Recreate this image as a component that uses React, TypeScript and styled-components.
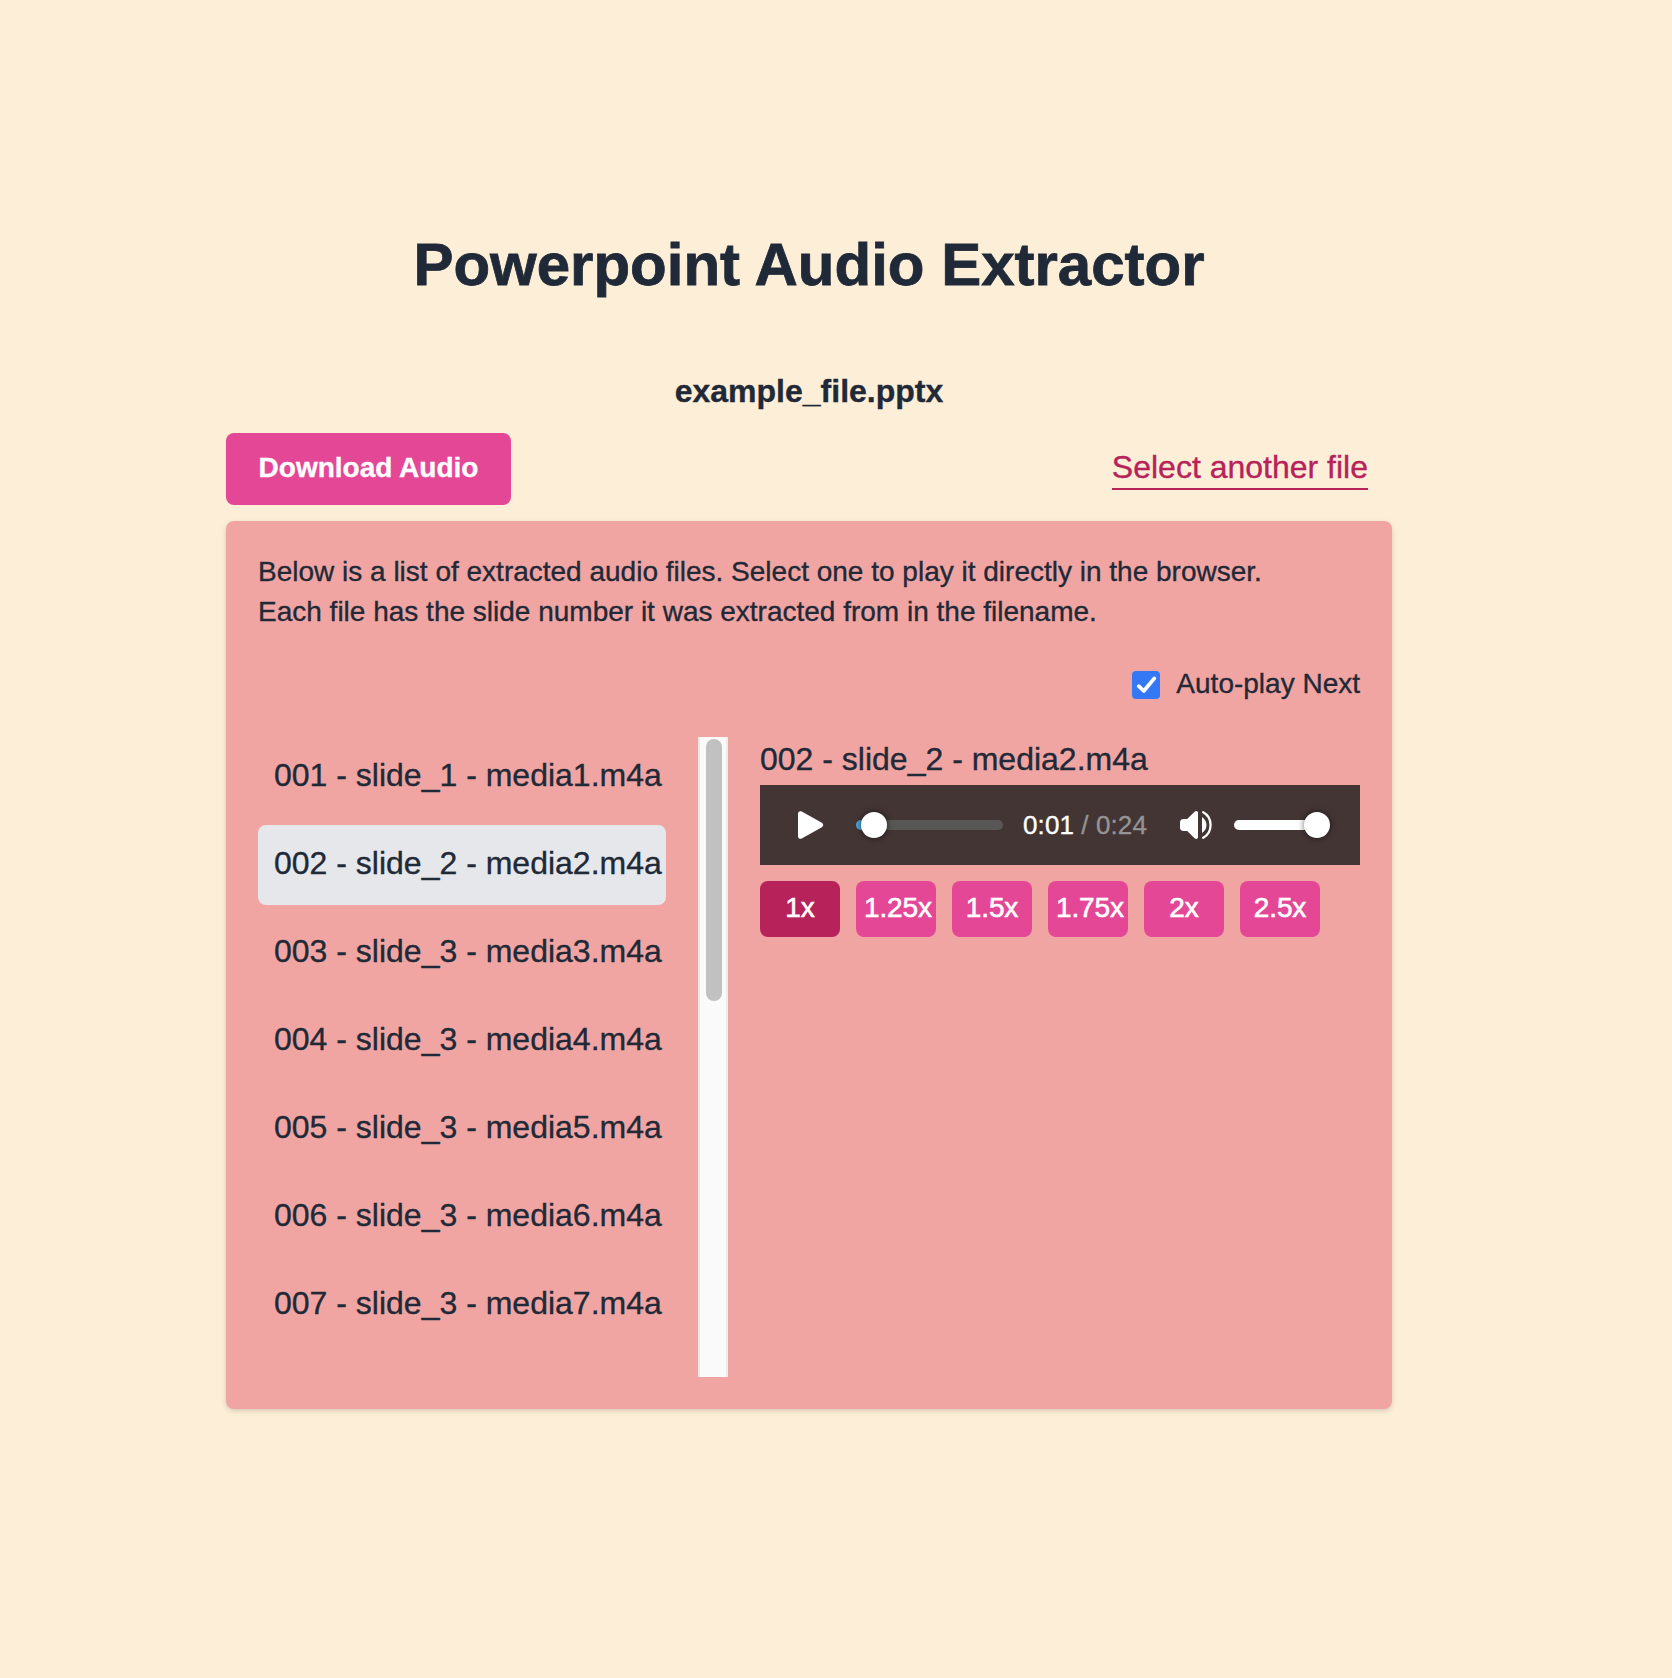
import React, { useState } from "react";
import styled, { createGlobalStyle } from "styled-components";

const Global = createGlobalStyle`
  *, *::before, *::after { box-sizing: border-box; }
  body {
    margin: 0;
    background: #fdeed8;
    color: #1f2937;
    font-family: "Liberation Sans", Arial, sans-serif;
    -webkit-text-stroke: 0.35px currentColor;
  }
  h1, h2, p, ul { margin: 0; padding: 0; }
  button { font-family: inherit; border: 0; cursor: pointer; }
`;

const Page = styled.main`
  width: 1166px;
  min-height: 1678px;
  margin-left: 226px;
  padding-top: 229px;
`;

const Title = styled.h1`
  font-size: 60px;
  line-height: 72px;
  font-weight: 700;
  text-align: center;
  white-space: nowrap;
  -webkit-text-stroke-width: 0.8px;
`;

const FileName = styled.h2`
  margin-top: 66px;
  font-size: 32px;
  line-height: 48px;
  font-weight: 700;
  text-align: center;
`;

const Actions = styled.div`
  display: flex;
  justify-content: space-between;
  align-items: flex-start;
  height: 72px;
  margin-top: 18px;
  padding-right: 24px;
`;

const DownloadButton = styled.button`
  width: 285px;
  height: 72px;
  padding: 0 0 2px;
  border-radius: 8px;
  background: #e54797;
  color: #fff;
  font-size: 28px;
  line-height: 40px;
  font-weight: 700;
  white-space: nowrap;
`;

const SelectLink = styled.a`
  height: 57px;
  padding-top: 10px;
  border-bottom: 2px solid #b62259;
  color: #b62259;
  font-size: 32px;
  line-height: 48px;
  white-space: nowrap;
`;

const Card = styled.section`
  height: 888px;
  margin-top: 16px;
  padding: 31px 32px 32px;
  border-radius: 8px;
  background: #f1a5a3;
  box-shadow: 0 2px 6px rgba(0, 0, 0, 0.1), 0 2px 4px rgba(0, 0, 0, 0.06);
`;

const Intro = styled.p`
  font-size: 28px;
  line-height: 40px;
  white-space: nowrap;
`;

const AutoPlay = styled.label`
  display: flex;
  justify-content: flex-end;
  align-items: center;
  gap: 16px;
  height: 40px;
  margin-top: 33px;
  font-size: 28px;
  line-height: 36px;
`;

const AutoPlayText = styled.span`
  padding-bottom: 2px;
`;

const Check = styled.span`
  display: flex;
  width: 28px;
  height: 28px;
  border-radius: 4px;
  background: #3478f6;
`;

const Columns = styled.div`
  display: flex;
  height: 640px;
  margin-top: 32px;
`;

const ListPane = styled.div`
  display: flex;
  justify-content: space-between;
  width: 470px;
  margin-right: 32px;
`;

const FileList = styled.ul`
  display: flex;
  flex-direction: column;
  gap: 8px;
  width: 408px;
  list-style: none;
`;

const FileRow = styled.li<{ $selected: boolean }>`
  height: 80px;
  padding: 14px 0 0 16px;
  border-radius: 8px;
  background: ${(p) => (p.$selected ? "#e5e7eb" : "transparent")};
  font-size: 32px;
  line-height: 48px;
  white-space: nowrap;
  cursor: pointer;
`;

const ScrollTrack = styled.div`
  width: 30px;
  height: 640px;
  padding: 2px 4px 0 6px;
  border-left: 2px solid #e8e8e8;
  border-right: 2px solid #ededed;
  background: #fafafa;
`;

const ScrollThumb = styled.div`
  width: 16px;
  height: 262px;
  border-radius: 8px;
  background: #c1c1c1;
`;

const PlayerPane = styled.div`
  width: 600px;
`;

const TrackName = styled.p`
  height: 48px;
  font-size: 32px;
  line-height: 44px;
  white-space: nowrap;
`;

const Player = styled.div`
  display: flex;
  align-items: center;
  height: 80px;
  padding-left: 36px;
  background: #433534;
`;

const Slider = styled.div<{ $width: number; $left: number; $rail: string }>`
  display: flex;
  align-items: center;
  width: ${(p) => p.$width}px;
  height: 10px;
  margin-left: ${(p) => p.$left}px;
  border-radius: 5px;
  background: ${(p) => p.$rail};
`;

const Played = styled.div<{ $width: number; $color: string }>`
  flex: none;
  width: ${(p) => p.$width}px;
  height: 10px;
  border-radius: 5px 0 0 5px;
  background: ${(p) => p.$color};
`;

const Knob = styled.div`
  flex: none;
  width: 26px;
  height: 26px;
  margin-left: -13px;
  border-radius: 50%;
  background: #fff;
  box-shadow: 0 0 6px rgba(0, 0, 0, 0.6);
`;

const Time = styled.div`
  width: 158px;
  padding-left: 20px;
  color: #949494;
  font-size: 26px;
  line-height: 32px;
  letter-spacing: 0.1px;
  white-space: nowrap;
`;

const Elapsed = styled.span`
  color: #fff;
`;

const VolumeIcon = styled.svg`
  flex: none;
  margin-left: 19px;
`;

const Speeds = styled.div`
  display: flex;
  gap: 16px;
  margin-top: 16px;
`;

const SpeedButton = styled.button<{ $active: boolean }>`
  display: flex;
  justify-content: safe center;
  width: 80px;
  height: 56px;
  padding: 7px 8px 0;
  border-radius: 8px;
  background: ${(p) => (p.$active ? "#b62259" : "#e54797")};
  color: #fff;
  font-size: 28px;
  line-height: 40px;
  letter-spacing: -0.15px;
  white-space: nowrap;
  -webkit-text-stroke-width: 0.6px;
`;

const files = [
  "001 - slide_1 - media1.m4a",
  "002 - slide_2 - media2.m4a",
  "003 - slide_3 - media3.m4a",
  "004 - slide_3 - media4.m4a",
  "005 - slide_3 - media5.m4a",
  "006 - slide_3 - media6.m4a",
  "007 - slide_3 - media7.m4a",
];

const speeds = ["1x", "1.25x", "1.5x", "1.75x", "2x", "2.5x"];

export default function App() {
  const [selected, setSelected] = useState(1);
  const [speed, setSpeed] = useState("1x");

  return (
    <>
      <Global />
      <Page>
        <Title>Powerpoint Audio Extractor</Title>
        <FileName>example_file.pptx</FileName>
        <Actions>
          <DownloadButton>Download Audio</DownloadButton>
          <SelectLink>Select another file</SelectLink>
        </Actions>
        <Card>
          <Intro>
            Below is a list of extracted audio files. Select one to play it directly in the browser.
            <br />
            Each file has the slide number it was extracted from in the filename.
          </Intro>
          <AutoPlay>
            <Check>
              <svg width="28" height="28" viewBox="0 0 28 28" fill="none">
                <path d="M6.8 15.2 L11.8 20 L22.3 7.4" stroke="#fff" strokeWidth="3.8" strokeLinecap="round" strokeLinejoin="round" />
              </svg>
            </Check>
            <AutoPlayText>Auto-play Next</AutoPlayText>
          </AutoPlay>
          <Columns>
            <ListPane>
              <FileList>
                {files.map((name, i) => (
                  <FileRow key={name} $selected={i === selected} onClick={() => setSelected(i)}>
                    {name}
                  </FileRow>
                ))}
              </FileList>
              <ScrollTrack>
                <ScrollThumb />
              </ScrollTrack>
            </ListPane>
            <PlayerPane>
              <TrackName>{files[selected]}</TrackName>
              <Player>
                <svg width="28" height="28" viewBox="0 0 28 28" fill="#fff">
                  <path d="M2 2.8C2 .7 3.8-.5 5.8.5L25.4 11.6C27.8 13 27.8 15 25.4 16.4L5.8 27.5C3.8 28.5 2 27.3 2 25.2Z" />
                </svg>
                <Slider $width={147} $left={32} $rail="#595755">
                  <Played $width={18} $color="#4ba3d6" />
                  <Knob />
                </Slider>
                <Time>
                  <Elapsed>0:01</Elapsed> / 0:24
                </Time>
                <VolumeIcon width="34" height="28" viewBox="0 0 34 28" fill="#fff">
                  <path d="M3.4 8H7.2L14.6.8C15.9-.5 18 0 18 2V26C18 28 15.9 28.5 14.6 27.2L7.2 20H3.4C1.3 20 0 18.7 0 16.6V11.4C0 9.3 1.3 8 3.4 8Z" />
                  <path d="M22 6C28 10 28 18 22 22Z" />
                  <path d="M23.2 1.2C33 6.5 33 21.5 23.2 26.8" fill="none" stroke="#fff" strokeWidth="2.3" strokeLinecap="round" />
                </VolumeIcon>
                <Slider $width={96} $left={20} $rail="transparent">
                  <Played $width={83} $color="#fff" />
                  <Knob />
                </Slider>
              </Player>
              <Speeds>
                {speeds.map((s) => (
                  <SpeedButton key={s} $active={s === speed} onClick={() => setSpeed(s)}>
                    {s}
                  </SpeedButton>
                ))}
              </Speeds>
            </PlayerPane>
          </Columns>
        </Card>
      </Page>
    </>
  );
}
